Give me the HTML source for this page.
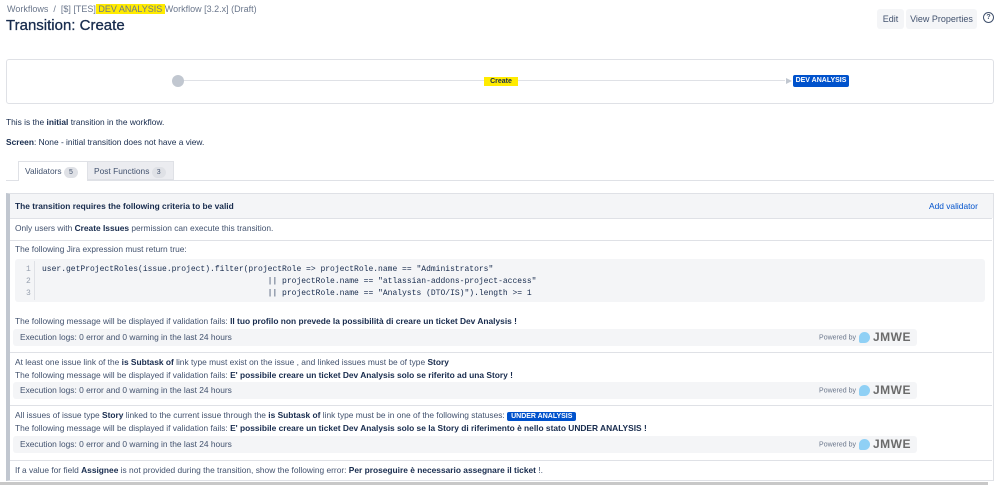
<!DOCTYPE html>
<html><head><meta charset="utf-8"><style>
*{margin:0;padding:0;box-sizing:border-box}
body{width:998px;height:485px;overflow:hidden;background:#fff;font-family:"Liberation Sans",sans-serif;color:#172b4d;font-size:8.4px;position:relative}
.a{position:absolute;white-space:nowrap}
b{font-weight:bold}
.hl{background:#ffeb00}
.logs{position:absolute;left:13px;width:904px;height:17px;background:#f4f5f7;border-radius:3px;color:#42526e;padding-left:7px;line-height:17px}
.pw{position:absolute;right:6px;top:0;font-size:7px;color:#6b778c}
.pw i{display:inline-block;width:11px;height:11px;border-radius:50% 50% 50% 2px;background:#8fd0f5;vertical-align:middle;margin:0 3px}
.pw span{font-weight:bold;font-size:12px;color:#6b6b6b;vertical-align:middle;letter-spacing:.5px}
.row{position:absolute;left:10px;right:6px;border-top:1px solid #dfe1e6}
.code{font-family:"Liberation Mono",monospace;font-size:8px;color:#172b4d}
.bd{display:inline-block;background:#dfe1e6;border-radius:8px;padding:0 5px;font-size:7px;line-height:11px;color:#42526e}
</style></head><body>
<div class="a" style="left:7px;top:4px;font-size:9px;color:#6b778c">Workflows &nbsp;/ &nbsp;[$] [TES]<span class="hl"> DEV ANALYSIS </span>Workflow [3.2.x] (Draft)</div>
<div class="a" style="left:6px;top:17px;font-size:15px;color:#172b4d;-webkit-text-stroke:0.3px #172b4d">Transition: Create</div>
<div class="a" style="left:877px;top:9px;width:27px;height:20px;background:#f4f5f7;border-radius:3px;font-size:9px;line-height:20px;text-align:center;color:#42526e">Edit</div>
<div class="a" style="left:906px;top:9px;width:71px;height:20px;background:#f4f5f7;border-radius:3px;font-size:9px;line-height:20px;text-align:center;color:#42526e">View Properties</div>
<div class="a" style="left:983px;top:12px;width:11px;height:11px;border:1.3px solid #42526e;border-radius:50%;font-size:7px;text-align:center;line-height:9px;font-weight:bold;color:#42526e">?</div>

<div class="a" style="left:6px;top:59px;width:988px;height:45px;border:1px solid #dfe1e6;border-radius:3px"></div>
<div class="a" style="left:178px;top:80px;width:607px;height:1px;background:#dfe1e6"></div>
<div class="a" style="left:172px;top:75px;width:12px;height:12px;border-radius:50%;background:#c1c7d0"></div>
<div class="a" style="left:484px;top:77px;width:34px;height:9px;background:#ffeb00;font-size:7px;font-weight:bold;text-align:center;line-height:9px">Create</div>
<div class="a" style="left:786px;top:78px;width:0;height:0;border-left:6px solid #c1c7d0;border-top:3px solid transparent;border-bottom:3px solid transparent"></div>
<div class="a" style="left:793px;top:75px;width:56px;height:12px;background:#0052cc;border-radius:2px;color:#fff;font-size:7px;font-weight:bold;text-align:center;line-height:12px">DEV ANALYSIS</div>

<div class="a" style="left:6px;top:117px">This is the <b>initial</b> transition in the workflow.</div>
<div class="a" style="left:6px;top:137px"><b>Screen</b>: None - initial transition does not have a view.</div>

<div class="a" style="left:6px;top:180px;width:988px;height:1px;background:#dfe1e6"></div>
<div class="a" style="left:18px;top:161px;width:70px;height:20px;background:#fff;border:1px solid #dfe1e6;border-bottom:none;line-height:18px;padding-left:6px;color:#42526e">Validators <span class="bd">5</span></div>
<div class="a" style="left:87px;top:161px;width:87px;height:19px;background:#ebecf0;border:1px solid #dfe1e6;line-height:18px;padding-left:6px;color:#42526e">Post Functions <span class="bd">3</span></div>

<div class="a" style="left:6px;top:193px;width:988px;height:288px;border:1px solid #dfe1e6;border-left:4px solid #c1c7d0"></div>
<div class="a" style="left:10px;top:194px;width:983px;height:24px;background:#f4f5f7"></div>
<div class="a" style="left:15px;top:201px;font-weight:bold">The transition requires the following criteria to be valid</div>
<div class="a" style="left:929px;top:201px;color:#0052cc">Add validator</div>

<div class="row" style="top:218px"></div>
<div class="a" style="left:15px;top:223px;color:#42526e">Only users with <b style="color:#172b4d">Create Issues</b> permission can execute this transition.</div>
<div class="row" style="top:240px"></div>
<div class="a" style="left:15px;top:244px;color:#42526e">The following Jira expression must return true:</div>
<div class="a" style="left:15px;top:259px;width:970px;height:43px;background:#f4f5f7;border-radius:3px"></div>
<div class="a" style="left:34px;top:261px;width:1px;height:39px;background:#dfe1e6"></div>
<div class="a code" style="left:26px;top:264px;color:#97a0af;line-height:12px">1<br>2<br>3</div>
<div class="a code" style="left:42px;top:264px;line-height:12px;white-space:pre">user.getProjectRoles(issue.project).filter(projectRole =&gt; projectRole.name == "Administrators"
                                               || projectRole.name == "atlassian-addons-project-access"
                                               || projectRole.name == "Analysts (DTO/IS)").length &gt;= 1</div>
<div class="a" style="left:15px;top:316px;color:#42526e">The following message will be displayed if validation fails: <b style="color:#172b4d">Il tuo profilo non prevede la possibilità di creare un ticket Dev Analysis !</b></div>
<div class="logs" style="top:329px">Execution logs: 0 error and 0 warning in the last 24 hours<div class="pw">Powered by<i></i><span>JMWE</span></div></div>

<div class="row" style="top:352px"></div>
<div class="a" style="left:15px;top:357px;color:#42526e">At least one issue link of the <b style="color:#172b4d">is Subtask of</b> link type must exist on the issue , and linked issues must be of type <b style="color:#172b4d">Story</b></div>
<div class="a" style="left:15px;top:370px;color:#42526e">The following message will be displayed if validation fails: <b style="color:#172b4d">E' possibile creare un ticket Dev Analysis solo se riferito ad una Story !</b></div>
<div class="logs" style="top:382px">Execution logs: 0 error and 0 warning in the last 24 hours<div class="pw">Powered by<i></i><span>JMWE</span></div></div>

<div class="row" style="top:405px"></div>
<div class="a" style="left:15px;top:410px;color:#42526e">All issues of issue type <b style="color:#172b4d">Story</b> linked to the current issue through the <b style="color:#172b4d">is Subtask of</b> link type must be in one of the following statuses: <span style="background:#0052cc;color:#fff;font-weight:bold;font-size:7px;padding:1px 4px;border-radius:2px">UNDER ANALYSIS</span></div>
<div class="a" style="left:15px;top:423px;color:#42526e">The following message will be displayed if validation fails: <b style="color:#172b4d">E' possibile creare un ticket Dev Analysis solo se la Story di riferimento è nello stato UNDER ANALYSIS !</b></div>
<div class="logs" style="top:436px">Execution logs: 0 error and 0 warning in the last 24 hours<div class="pw">Powered by<i></i><span>JMWE</span></div></div>

<div class="row" style="top:460px"></div>
<div class="a" style="left:15px;top:465px;color:#42526e">If a value for field <b style="color:#172b4d">Assignee</b> is not provided during the transition, show the following error: <b style="color:#172b4d">Per proseguire è necessario assegnare il ticket</b> !.</div>
<div class="a" style="left:0;top:482px;width:988px;height:3px;background:#c8c8c8"></div>
</body></html>
